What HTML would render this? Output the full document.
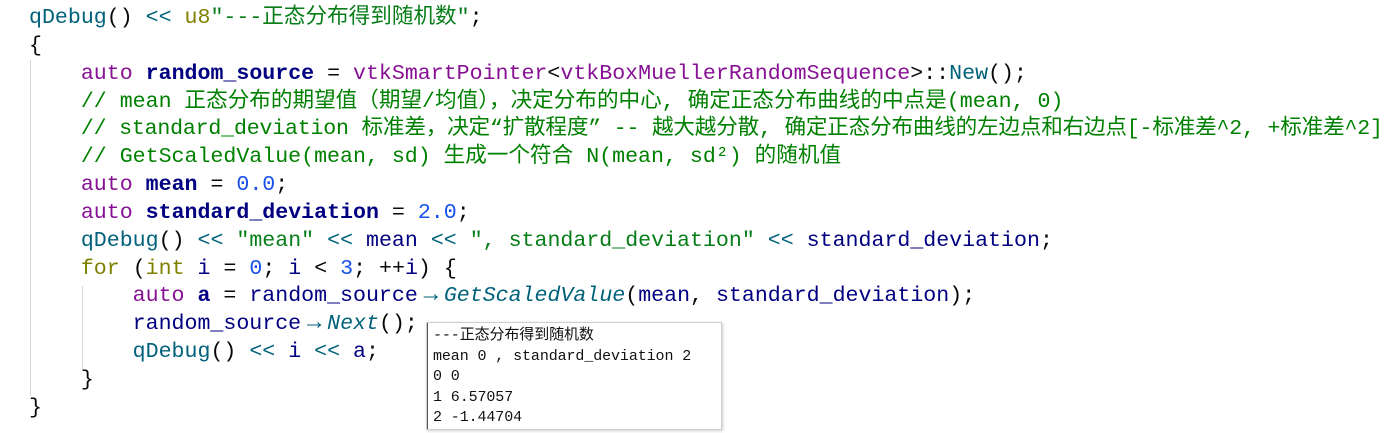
<!DOCTYPE html>
<html><head><meta charset="utf-8"><style>
body{margin:0;width:1389px;height:433px;background:#fff;overflow:hidden;position:relative}
pre{margin:0;position:absolute;left:29px;top:5px;font-family:"Liberation Mono","Noto Sans CJK SC",monospace;font-size:21.6px;line-height:27.85px;color:#080808;letter-spacing:0}
.f{color:#00627A}.k{color:#0033B3}.o{color:#808000}.s{color:#067D17}.p{color:#871094}.c{color:#008000}.n{color:#1750EB}.v{color:#000080;font-weight:bold}.i{font-style:italic;color:#00627A}.id{color:#000080}
.a{display:inline-block;width:26px;text-align:center;font-size:24px;line-height:20px;color:#00627A}
.g{position:absolute;width:1px;background:#d8d8d8}
.pop{position:absolute;left:426px;top:322px;width:296px;height:108px;background:#fff;border:1px solid #cfcfcf;box-shadow:1px 1px 3px rgba(0,0,0,.2);font-family:"Liberation Mono","Noto Sans CJK SC",monospace;font-size:15px;line-height:20.5px;color:#111;padding:3px 0 0 6px;box-sizing:border-box;letter-spacing:-0.1px}
.pop:before{content:"";position:absolute;left:0;top:0;bottom:0;width:1px;background:#555}
</style></head><body>
<div class="g" style="left:30px;top:60px;height:336px"></div>
<div class="g" style="left:82px;top:286px;height:84px"></div>
<pre><span class="f">qDebug</span>() <span class="f">&lt;&lt;</span> <span class="o">u8</span><span class="s">"---正态分布得到随机数"</span>;
{
    <span class="p">auto</span> <span class="v">random_source</span> = <span class="p">vtkSmartPointer</span>&lt;<span class="p">vtkBoxMuellerRandomSequence</span>&gt;::<span class="f">New</span>();
    <span class="c">// mean 正态分布的期望值（期望/均值），决定分布的中心, 确定正态分布曲线的中点是(mean, 0)</span>
    <span class="c" style="letter-spacing:-0.2px">// standard_deviation 标准差，决定“扩散程度” -- 越大越分散, 确定正态分布曲线的左边点和右边点[-标准差^2, +标准差^2]</span>
    <span class="c">// GetScaledValue(mean, sd) 生成一个符合 N(mean, sd²) 的随机值</span>
    <span class="p">auto</span> <span class="v">mean</span> = <span class="n">0.0</span>;
    <span class="p">auto</span> <span class="v">standard_deviation</span> = <span class="n">2.0</span>;
    <span class="f">qDebug</span>() <span class="f">&lt;&lt;</span> <span class="s">"mean"</span> <span class="f">&lt;&lt;</span> <span class="id">mean</span> <span class="f">&lt;&lt;</span> <span class="s">", standard_deviation"</span> <span class="f">&lt;&lt;</span> <span class="id">standard_deviation</span>;
    <span class="o">for</span> (<span class="o">int</span> <span class="id">i</span> = <span class="n">0</span>; <span class="id">i</span> &lt; <span class="n">3</span>; ++<span class="id">i</span>) {
        <span class="p">auto</span> <span class="v">a</span> = <span class="id">random_source</span><span class="a">→</span><span class="i">GetScaledValue</span>(<span class="id">mean</span>, <span class="id">standard_deviation</span>);
        <span class="id">random_source</span><span class="a">→</span><span class="i">Next</span>();
        <span class="f">qDebug</span>() <span class="f">&lt;&lt;</span> <span class="id">i</span> <span class="f">&lt;&lt;</span> <span class="id">a</span>;
    }
}</pre>
<div class="pop">---正态分布得到随机数<br>mean 0 , standard_deviation 2<br>0 0<br>1 6.57057<br>2 -1.44704</div>
</body></html>
